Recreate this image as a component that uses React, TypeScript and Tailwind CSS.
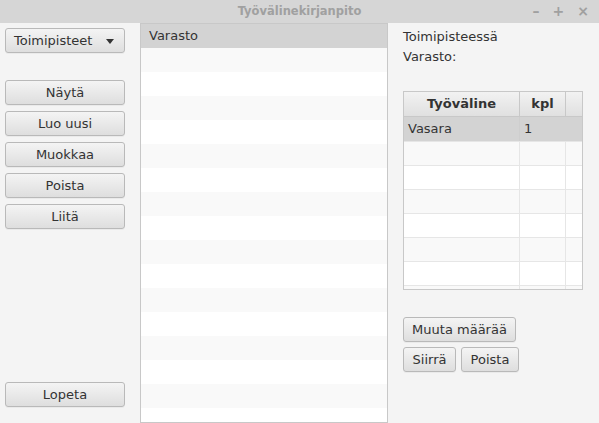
import React from 'react';

const font = { fontFamily: '"DejaVu Sans", Verdana, sans-serif' };

const btn =
  'h-[25px] rounded-[3px] border border-[#b9b9b9] bg-gradient-to-b from-[#f4f4f4] to-[#dedede] text-[13px] text-[#333] flex items-center justify-center shadow-[0_1px_0_rgba(0,0,0,0.04)]';

const Button: React.FC<{ label: string; className?: string }> = ({ label, className = '' }) => (
  <button className={`${btn} ${className}`}>{label}</button>
);

const listRows = Array.from({ length: 16 });
const tableRows = ['', '', '', '', '', '', ''];

export default function App() {
  return (
    <div className="w-[599px] h-[423px] bg-[#f4f4f4] flex flex-col overflow-hidden" style={font}>
      {/* title bar */}
      <div className="h-[23px] bg-[#d6d6d6] relative flex items-center justify-center shrink-0">
        <span className="text-[11.5px] font-bold text-[#a0a0a0]">Työvälinekirjanpito</span>
        <div className="absolute right-[10px] top-0 h-full flex items-center gap-[13px] text-[#a0a0a0] font-bold text-[14px]">
          <span>–</span>
          <span>+</span>
          <span>×</span>
        </div>
      </div>

      <div className="flex flex-1 min-h-0">
        {/* left column */}
        <div className="w-[140px] shrink-0 flex flex-col pl-[5px] pr-[15px] pt-[5px] pb-[16px]">
          <button className={`${btn} w-[120px] justify-start pl-[8px] relative`}>
            Toimipisteet
            <svg className="absolute right-[10px] top-[10px]" width="8" height="5" viewBox="0 0 8 5">
              <path d="M0 0h8L4 5z" fill="#333" />
            </svg>
          </button>
          <div className="flex flex-col gap-[6px] mt-[27px]">
            <Button label="Näytä" className="w-[120px]" />
            <Button label="Luo uusi" className="w-[120px]" />
            <Button label="Muokkaa" className="w-[120px]" />
            <Button label="Poista" className="w-[120px]" />
            <Button label="Liitä" className="w-[120px]" />
          </div>
          <Button label="Lopeta" className="w-[120px] mt-auto" />
        </div>

        {/* list */}
        <div className="w-[248px] shrink-0 border border-[#c8c8c8] bg-white flex flex-col overflow-hidden">
          <div className="h-[24px] bg-[#d3d3d3] flex items-center pl-[8px] text-[13px] text-[#333] shrink-0">
            Varasto
          </div>
          {listRows.map((_, i) => (
            <div key={i} className={`h-[24px] shrink-0 ${i % 2 === 0 ? 'bg-[#f9f9f9]' : 'bg-white'}`} />
          ))}
        </div>

        {/* right panel */}
        <div className="flex-1 pl-[15px] pt-[4px] flex flex-col">
          <div className="text-[13px] leading-[20px] text-[#333]">Toimipisteessä</div>
          <div className="text-[13px] leading-[20px] text-[#333]">Varasto:</div>

          <div className="mt-[24px] w-[180px] h-[199px] border border-[#c8c8c8] bg-white flex flex-col overflow-hidden">
            <div className="h-[25px] shrink-0 flex bg-gradient-to-b from-[#f2f2f2] to-[#e0e0e0] border-b border-[#c8c8c8] text-[13px] font-bold text-[#333]">
              <div className="w-[116px] border-r border-[#c8c8c8] flex items-center justify-center">Työväline</div>
              <div className="w-[46px] border-r border-[#c8c8c8] flex items-center justify-center">kpl</div>
              <div className="flex-1" />
            </div>
            <div className="h-[24px] shrink-0 flex bg-[#d3d3d3] text-[13px] text-[#333]">
              <div className="w-[116px] border-r border-[#c8c8c8]/40 flex items-center pl-[4px]">Vasara</div>
              <div className="w-[46px] flex items-center pl-[4px]">1</div>
              <div className="flex-1" />
            </div>
            {tableRows.map((_, i) => (
              <div
                key={i}
                className={`h-[24px] shrink-0 flex border-t border-[#e6e6e6] ${i % 2 === 0 ? 'bg-[#f9f9f9]' : 'bg-white'}`}
              >
                <div className="w-[116px] border-r border-[#e6e6e6]" />
                <div className="w-[46px] border-r border-[#e6e6e6]" />
                <div className="flex-1" />
              </div>
            ))}
          </div>

          <div className="mt-[27px] flex flex-col gap-[5px]">
            <Button label="Muuta määrää" className="w-[113px]" />
            <div className="flex gap-[5px]">
              <Button label="Siirrä" className="w-[53px]" />
              <Button label="Poista" className="w-[58px]" />
            </div>
          </div>
        </div>
      </div>
    </div>
  );
}
